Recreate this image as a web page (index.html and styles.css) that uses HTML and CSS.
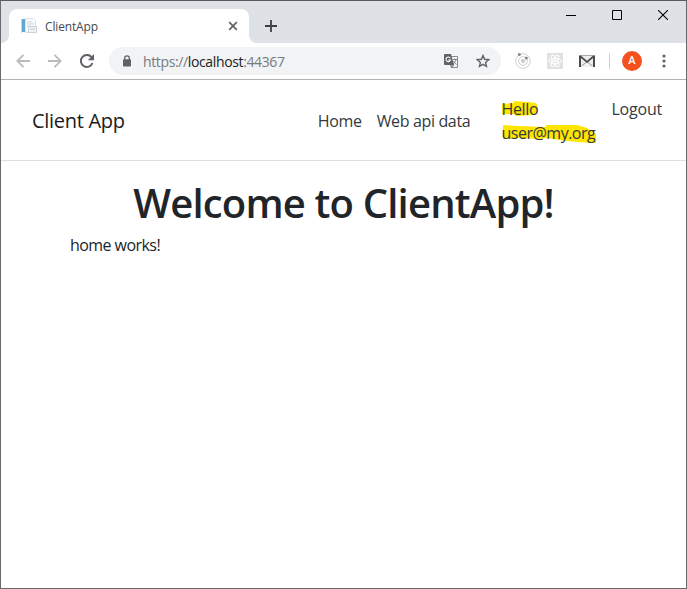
FILE: index.html
```html
<!DOCTYPE html>
<html lang="en">
<head>
<meta charset="utf-8">
<title>ClientApp</title>
<link rel="stylesheet" href="styles.css">
</head>
<body>
<div class="window">
  <header class="tabstrip">
    <div class="tab">
      <svg class="favicon" width="16" height="16" viewBox="0 0 16 16">
        <path d="M4.5.5h8l2 2v12h-10z" fill="#f8f9fa" stroke="#dde1e4"/>
        <path d="M0 1h1v14H0z" fill="#b9dced"/><path d="M1 1h3v13H1z" fill="#62a8d0"/>
        <path d="M6 4h5M6 6h7M6 8h4" stroke="#d2d9de"/>
        <path d="M7.5 8.5h8v6h-8z" fill="#f0f2f5" stroke="#cbd0d8"/><path d="M9 11h5" stroke="#c3c9d1"/>
      </svg>
      <span class="tab-title">ClientApp</span>
      <svg class="tab-close" width="10" height="10" viewBox="0 0 10 10"><path d="M1.2 1.2l7.6 7.6M8.8 1.2L1.2 8.8" stroke="#5f6368" stroke-width="1.7"/></svg>
    </div>
    <svg class="new-tab" width="12" height="12" viewBox="0 0 12 12"><path d="M6 0v12M0 6h12" stroke="#3c4043" stroke-width="1.8"/></svg>
    <div class="controls">
      <svg width="10" height="10" viewBox="0 0 10 10"><path d="M0 5.5h10" stroke="#000"/></svg>
      <svg width="10" height="10" viewBox="0 0 10 10"><path d="M.5.5h9v9h-9z" fill="none" stroke="#000"/></svg>
      <svg width="10" height="10" viewBox="0 0 10 10"><path d="M0 0l10 10M10 0L0 10" stroke="#000" stroke-width="1.1"/></svg>
    </div>
  </header>
  <div class="toolbar">
    <svg class="back" width="14" height="14" viewBox="0 0 14 14"><path d="M14 7H1.5M7.5.8L1.3 7l6.2 6.2" fill="none" stroke="#babcbe" stroke-width="1.8"/></svg>
    <svg class="forward" width="14" height="14" viewBox="0 0 14 14"><path d="M0 7h12.5M6.5.8L12.7 7l-6.2 6.2" fill="none" stroke="#babcbe" stroke-width="1.8"/></svg>
    <svg class="reload" width="14" height="14" viewBox="0 0 14 14"><path d="M12.5 9A6 6 0 1 1 11.5 3.1" fill="none" stroke="#5f6368" stroke-width="2"/><path d="M14 0v6.2H7.8z" fill="#5f6368"/></svg>
    <div class="omnibox">
      <svg class="lock" width="8" height="12" viewBox="0 0 8 12"><path d="M1.7 5V3.2a2.3 2.3 0 0 1 4.600 0V5" fill="none" stroke="#5f6368" stroke-width="1.3"/><rect y="4.3" width="8" height="7.2" rx="1" fill="#5f6368"/></svg>
      <span class="url">https://<b>localhost</b>:44367</span>
      <svg class="translate" width="14" height="14" viewBox="0 0 14 14"><path d="M6 2.5h7.5v11H7.5L6 10" fill="#f4f5f7" stroke="#85888c"/><path d="M1 0h6l3 11H1a1 1 0 0 1-1-1V1a1 1 0 0 1 1-1z" fill="#5f6368"/><path d="M6.3 4.1A2.3 2.3 0 1 0 6.5 6H4.3" fill="none" stroke="#fff" stroke-width="1.1"/><path d="M8.5 5.5H13M10.8 4.5v1M12 5.5c-.5 2-1.5 3.5-3 4.5M9.5 7c.7 1.5 1.5 2.5 3 3.5M8 11l-.5 2.5L10 11z" fill="none" stroke="#6c7074" stroke-width=".8"/></svg>
      <svg class="star" width="14" height="14" viewBox="0 0 14 14"><path d="M7 1.5l1.6 3.8 4.1.4-3.1 2.7.9 4L7 10.3l-3.5 2.1.9-4L1.3 5.7l4.100-.4z" fill="none" stroke="#5f6368" stroke-width="1.4"/></svg>
    </div>
    <svg class="orbit" width="16" height="16" viewBox="0 0 16 16"><g fill="none" stroke="#cfcfcf"><circle cx="8" cy="8" r="7.3"/><circle cx="8" cy="8" r="4.3"/></g><circle cx="8" cy="8" r="2" fill="#c9c9c9"/><circle cx="4.3" cy="1.6" r="1.5" fill="#8a8a8a"/><circle cx="11.3" cy="5" r="1.5" fill="#858585"/></svg>
    <svg class="react" width="16" height="16" viewBox="0 0 16 16"><path d="M0 0h16v16H0z" fill="#e1e1e1"/><g fill="none" stroke="#fff"><ellipse cx="8" cy="8" rx="6.3" ry="2.5"/><ellipse cx="8" cy="8" rx="6.3" ry="2.5" transform="rotate(60 8 8)"/><ellipse cx="8" cy="8" rx="6.3" ry="2.5" transform="rotate(120 8 8)"/></g><circle cx="8" cy="8" r="1.2" fill="#fff"/></svg>
    <svg class="mail" width="16" height="12" viewBox="0 0 16 12"><path d="M0 0h16v12H0z" fill="#ededed"/><path d="M2 11l6-5 6 5z" fill="#aaa"/><path d="M3.5 11L8 7.5l4.500 3.5z" fill="#f5f5f5"/><path d="M1 12V.8M15 12V.8" stroke="#4b4b4b" stroke-width="2"/><path d="M1 1l7 6 7-6" fill="none" stroke="#4b4b4b" stroke-width="1.7"/><path d="M0 .3h16" stroke="#777" stroke-width=".7"/></svg>
    <i class="divider"></i>
    <span class="avatar">A</span>
    <svg class="menu" width="4" height="14" viewBox="0 0 4 14" fill="#5f6368"><circle cx="2" cy="2" r="1.6"/><circle cx="2" cy="7" r="1.6"/><circle cx="2" cy="12" r="1.6"/></svg>
  </div>
  <nav class="navbar">
    <a class="brand">Client App</a>
    <a class="link home">Home</a>
    <a class="link data">Web api data</a>
    <a class="link user">
      <svg class="marker" width="96" height="50" viewBox="0 0 96 50" fill="#ffe500"><path d="M0 5l12-1V2l14 1 8 1 2 5-1 5-4 2-17 1-2-2H0z"/><path d="M1 26l14 1 29 1V26h31l10 3 7 5 2 1v9l-19-1-18-2-11-2-8 1-20-1-17 1z"/></svg>
      <span class="hello">Hello</span><span class="email">user@my.org</span>
    </a>
    <a class="link logout">Logout</a>
  </nav>
  <main>
    <h1>Welcome to ClientApp!</h1>
    <p>home works!</p>
  </main>
</div>
</body>
</html>
```

FILE: styles.css
```css
* { box-sizing: border-box; }
body { margin: 0; font-family: "Open Sans", "Noto Sans", sans-serif; color: #212529; background: #fff; }
svg { display: block; flex: none; }
.window { height: 589px; border: 1px solid #6a6a6a; border-top-color: #5b5b5f; background: #fff; overflow: hidden; }
.tabstrip { height: 42px; display: flex; background: #dee1e6; }
.tab { position: relative; width: 240px; height: 34px; margin: 8px 0 0 8px; padding: 0 11px 0 12px; display: flex; align-items: center; background: #fff; border-radius: 8px 8px 0 0; }
.tab::before, .tab::after { content: ""; position: absolute; bottom: 0; width: 8px; height: 8px; }
.tab::before { left: -8px; background: radial-gradient(circle at 0 0, #dee1e6 7.5px, #fff 8.5px); }
.tab::after { right: -8px; background: radial-gradient(circle at 100% 0, #dee1e6 7.5px, #fff 8.5px); }
.tab-title { margin-left: 8px; font-size: 12px; letter-spacing: -.15px; color: #45494d; }
.tab-close { margin-left: auto; }
.new-tab { margin: 19px 0 0 16px; }
.controls { margin: 9px 18px 0 auto; display: flex; gap: 36px; }
.toolbar { height: 37px; display: flex; align-items: center; border-bottom: 1px solid #b1b2b3; }
.back { margin-left: 15px; }
.forward { margin-left: 18px; }
.reload { margin-left: 18px; }
.omnibox { width: 392px; height: 28px; margin-left: 15px; padding: 0 11px 0 14px; display: flex; align-items: center; background: #f1f3f4; border-radius: 14px; }
.url { margin-left: 12px; font-size: 14px; letter-spacing: -.37px; color: #777b80; white-space: nowrap; }
.url b { font-weight: 400; color: #202124; }
.translate { margin-left: auto; }
.star { margin-left: 18px; }
.orbit { margin-left: 14px; }
.react { margin-left: 16px; }
.mail { margin-left: 16px; }
.divider { width: 1px; height: 16px; margin-left: 14px; background: #cfd0d2; }
.avatar { width: 20px; height: 20px; margin-left: 12px; border-radius: 50%; background: #f4511e; color: #fff; font: 500 11px/20px Roboto, sans-serif; text-align: center; }
.menu { margin-left: 20px; }
.navbar { height: 81px; padding: 17px 24px 0 31px; display: flex; border-bottom: 1px solid #dfe0e5; white-space: nowrap; }
.brand { width: 286px; margin-top: 9px; font-size: 20px; line-height: 30px; letter-spacing: -.3px; color: #1b1b1b; }
.link { font-size: 16px; line-height: 24px; color: #343a40; letter-spacing: -.35px; }
.home { width: 59px; margin-top: 12px; }
.data { width: 125px; margin-top: 12px; }
.user { position: relative; width: 110px; display: flex; flex-direction: column; }
.marker { position: absolute; left: 0; top: 2px; }
.hello, .email { position: relative; }
.email { letter-spacing: -.5px; }
.logout { letter-spacing: -.2px; }
main { padding: 18px 69px 0; }
h1 { margin: 0; font-size: 40px; line-height: 48px; font-weight: 600; letter-spacing: -.82px; text-align: center; white-space: nowrap; }
p { margin: 6px 0 0; font-size: 16px; line-height: 24px; letter-spacing: -.56px; }
```
